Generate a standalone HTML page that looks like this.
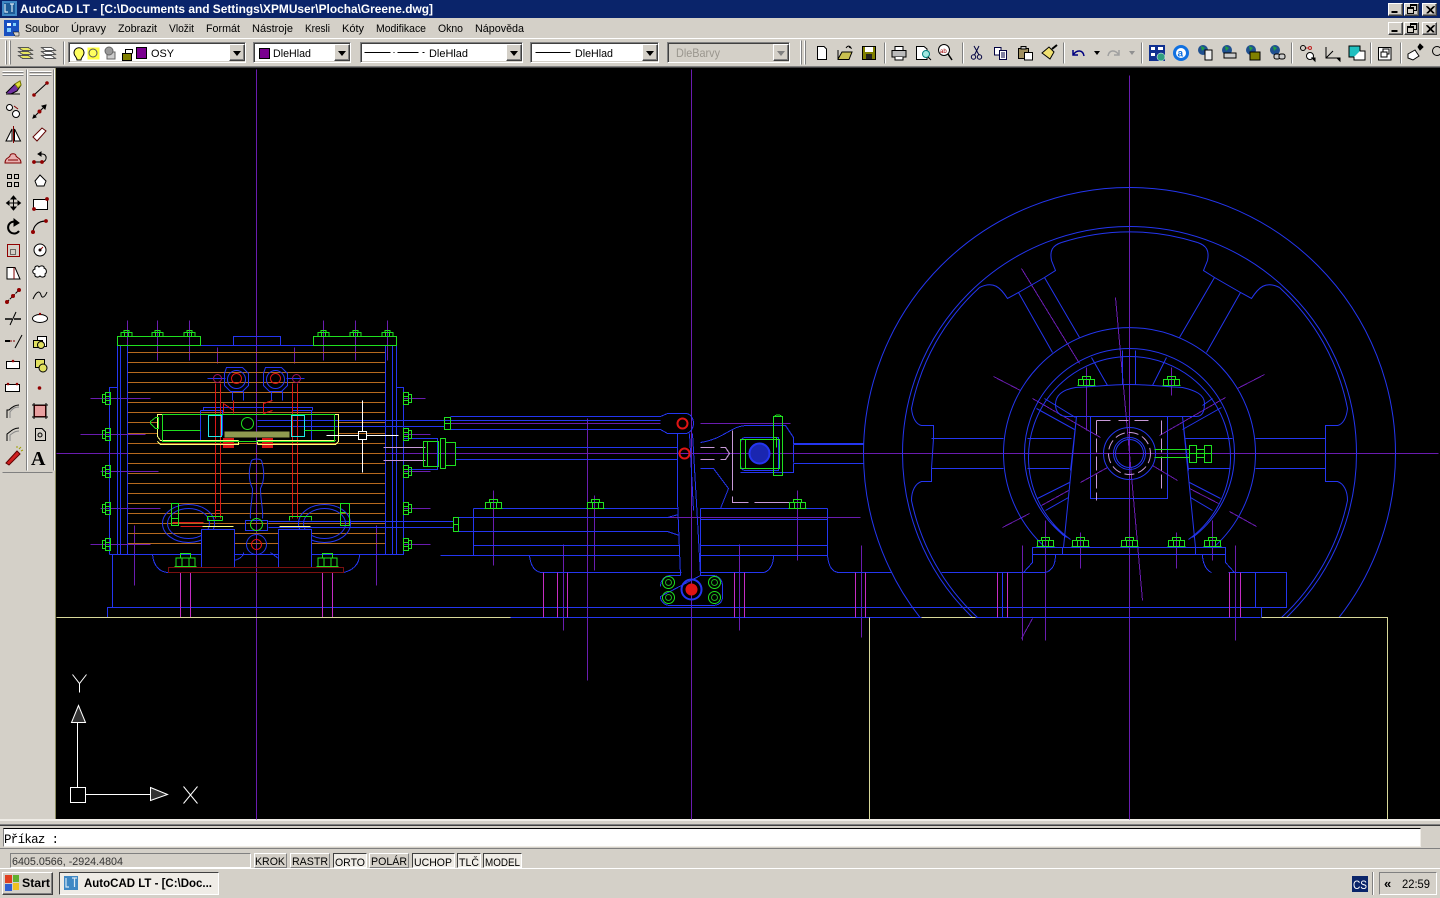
<!DOCTYPE html>
<html lang="cs"><head><meta charset="utf-8"><title>AutoCAD LT</title>
<style>
html,body{margin:0;padding:0;width:1440px;height:898px;overflow:hidden;background:#d4d0c8}
div{position:absolute;box-sizing:border-box}
.s{background:#fff;border:1px solid;border-color:#808080 #fff #fff #808080;box-shadow:inset 1px 1px #404040,inset -1px -1px #d4d0c8}
.r{background:#d4d0c8;border:1px solid;border-color:#fff #404040 #404040 #fff;box-shadow:inset -1px -1px #808080}
.t{background:#d4d0c8;border:1px solid;border-color:#808080 #fff #fff #808080}
.o{background:#d4d0c8;border:1px solid;border-color:#fff #808080 #808080 #fff}
.p{background:#efece6;border:1px solid;border-color:#404040 #fff #fff #404040}
svg{position:absolute;left:0;top:0}
text{font-family:"Liberation Sans",sans-serif;font-size:11px;fill:#000}
</style></head><body>
<div style="left:0;top:0;width:1440px;height:18px;background:#0a246a"></div>
<div style="left:0;top:38px;width:1440px;height:1px;background:#fff"></div>
<div style="left:0;top:66px;width:1440px;height:1px;background:#808080"></div>
<div style="left:0;top:67px;width:1440px;height:1px;background:#404040"></div>
<div style="left:55px;top:68px;width:1385px;height:751px;background:#000;border-left:1px solid #8c8c60"></div>
<div style="left:0;top:819px;width:1440px;height:2px;background:#efece6"></div>
<div style="left:0;top:824px;width:1440px;height:1px;background:#808080"></div>
<div style="left:0;top:825px;width:1440px;height:1px;background:#404040"></div>
<div style="left:0;top:848px;width:1440px;height:1px;background:#808080"></div>
<div style="left:0;top:868px;width:1440px;height:1px;background:#fff"></div>
<div style="left:3px;top:828px;width:1418px;height:19px;background:#fff;border:1px solid;border-color:#000 #efece6 #efece6 #808080"></div>

<div class="s" style="left:68px;top:42px;width:178px;height:21px"></div><div class="r" style="left:229px;top:44px;width:16px;height:17px"></div>
<div class="s" style="left:253px;top:42px;width:98px;height:21px"></div><div class="r" style="left:334px;top:44px;width:16px;height:17px"></div>
<div class="s" style="left:360px;top:42px;width:163px;height:21px"></div><div class="r" style="left:506px;top:44px;width:16px;height:17px"></div>
<div class="s" style="left:530px;top:42px;width:129px;height:21px"></div><div class="r" style="left:642px;top:44px;width:16px;height:17px"></div>
<div class="s" style="left:667px;top:42px;width:123px;height:21px;background:#d4d0c8"></div><div class="r" style="left:773px;top:44px;width:16px;height:17px"></div>

<div class="r" style="left:1388px;top:3px;width:15px;height:13px"></div><div class="r" style="left:1404px;top:3px;width:15px;height:13px"></div><div class="r" style="left:1422px;top:3px;width:15px;height:13px"></div>
<div class="r" style="left:1388px;top:22px;width:15px;height:13px"></div><div class="r" style="left:1404px;top:22px;width:15px;height:13px"></div><div class="r" style="left:1422px;top:22px;width:15px;height:13px"></div>

<div class="t" style="left:10px;top:853px;width:241px;height:15px;box-shadow:none"></div>
<div class="o" style="left:254px;top:853px;width:33px;height:15px"></div>
<div class="o" style="left:290px;top:853px;width:40px;height:15px"></div>
<div class="p" style="left:333px;top:853px;width:34px;height:15px"></div>
<div class="o" style="left:369px;top:853px;width:40px;height:15px"></div>
<div class="p" style="left:412px;top:853px;width:43px;height:15px"></div>
<div class="p" style="left:457px;top:853px;width:24px;height:15px"></div>
<div class="p" style="left:483px;top:853px;width:39px;height:15px"></div>

<div class="r" style="left:2px;top:872px;width:51px;height:23px"></div>
<div class="p" style="left:59px;top:872px;width:160px;height:23px"></div>
<div class="t" style="left:1379px;top:872px;width:58px;height:23px"></div>
<div style="left:1352px;top:876px;width:16px;height:16px;background:#0a246a"></div>
<div style="left:1372px;top:872px;width:1px;height:23px;background:#808080"></div>
<div style="left:1373px;top:872px;width:1px;height:23px;background:#fff"></div>

<svg width="1440" height="898" viewBox="0 0 1440 898" fill="none">
<defs>
<clipPath id="cv"><rect x="56" y="69" width="1384" height="750"/></clipPath>
<clipPath id="wc"><rect x="700" y="100" width="740" height="517"/></clipPath>
<g id="b" stroke="#1fe01f"><path vector-effect="non-scaling-stroke" d="M-9 0H9M-8 0V-6H8V0M-3 0V-6M3 0V-6M-4-6V-9H4V-6"/></g>
<g id="sb" stroke="#1fe01f"><path d="M0-6V6H5V-6ZM5-4H8V4H5M0-2H5M0 2H5"/></g>
<g id="sl" stroke="#1fe01f"><path d="M0-6V6H-5V-6ZM-5-4H-8V4H-5M0-2H-5M0 2H-5"/></g>
<g id="gb"><circle r="6" stroke="#1fe01f"/><circle r="3" stroke="#1fb01f"/></g>
</defs>

<!-- CAD drawing -->
<g clip-path="url(#cv)" transform="translate(.5 .5)" shape-rendering="crispEdges">
<!-- purple centre lines -->
<g stroke="#6a1cb0">
<path d="M256 69V819M691 69V819M1129 75V819M56 453H1438"/>
<path d="M587 418V680M563 544V630M739 544V630M127 320V360M157 320V360M189 320V360M323 320V360M355 320V360M387 320V360M217 347V363M294 347V363M134 525V585M376 525V585M1086 367V430M1171 367V395M861 545V637M1022 545V640M1045 545V640M1235 545V640M1080 532V568M1176 532V568M1045 520V560M1212 520V560M594 495V570M493 490V565M797 490V560"/>
<path d="M90 398H150M80 434H145M100 471H158M100 508H160M90 544H150M403 398H425M403 434H430M403 471H430M403 508H430M403 544H430"/>
<path d="M450 423H660M700 423H790M660 517H860"/>
<path d="M1021 268L1079 363M993 376L1020 390M1032 398L1100 437M1264 374L1237 388M1225 397L1159 435M1002 527L1029 513M1041 505L1068 490M1080 482L1107 467M1152 465L1177 480M1189 488L1218 503M1229 511L1256 526M1115 297L1129 453L1142 600M1032 618L1021 638"/>
</g>
<!-- orange hatch -->
<g stroke="#b5691e"><path d="M127 352H385M127 362H385M127 372H385M127 382H385M127 392H385M127 402H385M127 412H385M127 422H157M127 433H157M338 422H385M338 433H385M127 443H385M127 453H385M127 463H385M127 473H385M127 483H385M127 493H385M127 503H385M127 513H385M127 523H385M127 533H385M127 543H385M127 554H385"/></g>
<!-- blue frame -->
<g stroke="#2436f0" shape-rendering="geometricPrecision">
<ellipse cx="188" cy="523" rx="26" ry="19"/><ellipse cx="188" cy="523" rx="21" ry="15"/>
<ellipse cx="324" cy="523" rx="26" ry="19"/><ellipse cx="324" cy="523" rx="21" ry="15"/>
</g>
<g stroke="#2436f0">
<path d="M117 345H396V554H117ZM120 345V554M127 345V554M385 345V554M392 345V554M233 345V336H280V345"/>
<path d="M109 554V387H117M396 387H403V554H109M112 554V607M107 617V607H1261V617M107 617H1260"/>
<path d="M152 554C153 566 160 572 168 572M343 572C352 570 359 564 359 554"/>
<path d="M201 529V567H234V529ZM278 529V567H311V529Z" fill="#000"/><path d="M234 560C240 558 243 555 243 552M278 558L270 552"/>
<path d="M403 438H437V469H403"/>
<path d="M257 420H660M268 426H444M257 426H268M450 416H660L667 413H685C690 413 693 418 693 423C693 428 689 433 685 433H667L660 429H450"/>
<path d="M455 447H677M455 459H677M268 521H453M268 527H453M458 517H667L678 514M458 531H667L679 535"/>
<path d="M473 508H678M700 508H827M473 508V555M827 508V555M473 545H679M700 519H827M700 545H827M440 555H679M700 555H827"/>
<path d="M529 555C530 566 535 572 542 572H681M700 572H762C768 572 773 565 773 555M827 555C828 566 832 572 839 572H891M1228 572H1286V607H1045M941 572H1045M1023 572L1032 562V554M1045 572C1052 570 1055 563 1055 554M1211 572C1206 570 1202 563 1202 554M1225 554V562L1234 572M1261 607V617M1286 607H1260M1255 572V607M1002 572V617"/>
<path d="M677 433L677 500L680 575M692 433L697 520L700 575M689 433L693 510M700 508V575"/>
<path d="M660 586C660 579 665 575 670 575H680M700 575H712C718 575 722 579 722 586V596C722 602 718 605 712 605H670C665 605 660 602 660 596Z"/>
<path d="M700 442C725 438 730 425 747 425H785L793 437V443H863M793 463V472H740M793 463H863M700 468H713L728 488L720 508M793 462V444"/>
<path d="M740 443C740 439 742 437 745 437H778V470H745C742 470 740 468 740 464Z"/>
</g>
<g stroke="#2436f0" stroke-width="1" shape-rendering="geometricPrecision">
<circle cx="691" cy="589" r="10" stroke-width="2"/>
<ellipse cx="759" cy="453" rx="10" ry="10" stroke-width="2" fill="#1a26b0"/>
<path d="M251 460C248 470 248 480 252 488C252 500 249 510 250 518M261 460C264 470 264 480 260 488C260 500 263 510 262 518M251 460C253 458 259 458 261 460"/>
<path d="M245 520H267V530H245Z" />
<circle cx="256" cy="544" r="10"/>
<path d="M226 367L242 367L248 373V385L242 391H230L224 385V373Z"/><path d="M265 367H281L287 373V385L281 391H269L263 385V373Z"/>
<circle cx="236" cy="379" r="9"/><circle cx="275" cy="379" r="9"/>
<path d="M203 410V407H312V410M232 391V400M243 391V400M271 391V400M282 391V400M207 378H225M286 378H304"/>
<path d="M200 410H222V435M292 435V410H311V440H290M200 440H222M200 410V440"/>
</g>
<!-- Wheel -->
<g clip-path="url(#wc)" stroke="#2436f0" shape-rendering="geometricPrecision">
<circle cx="1129" cy="453" r="266"/>
<circle cx="1129" cy="453" r="227"/>
<path id="pad" d="M979 287C993 280 1000 287 1007 298L1018 292L1044 277L1055 270L1051 260C1049 250 1052 245 1061 242"/>
<use href="#pad" transform="matrix(-1 0 0 1 2258 0)"/>
<path d="M979 287A222 222 0 0 0 911 408C912 418 916 424 921 425H933V438L931 468V481H921C915 483 911 490 911 500A222 222 0 0 0 977 617"/>
<path d="M1279 287A222 222 0 0 1 1347 408C1346 418 1342 424 1337 425H1325V438L1325 468V481H1337C1343 483 1347 490 1347 500A222 222 0 0 1 1281 617"/>
<path d="M1061 242A222 222 0 0 1 1197 242"/>
<path d="M931 438H1003M931 468H1003M1255 438H1325M1255 468H1325M1018 292L1052 352M1044 277L1079 337M1240 292L1206 352M1214 277L1179 337"/>
<path d="M1045 547A126 126 0 1 1 1213 547"/>
<path d="M1066 537A105 105 0 1 1 1192 537"/>
<path d="M1070 539A101 101 0 1 1 1188 539"/>
<path d="M1063 535L1052 524"/>
<path d="M1091 357L1107 385M1166 357L1152 385M1122 350V384M1135 350V384M1027 438H1071M1027 468H1069M1185 438H1232M1187 468H1230M1036 408L1074 429M1044 398L1075 417M1221 407L1182 429M1212 398L1202 405M1037 498L1069 482M1045 510L1068 497M1220 498L1189 482M1212 510L1190 497"/>
<path d="M1075 387C1095 386 1112 384 1129 384C1146 384 1163 386 1182 387C1195 390 1204 394 1204 403C1204 411 1202 416 1196 416H1066C1060 416 1055 412 1055 404C1055 394 1063 389 1075 387Z"/>
<path d="M1090 416V498H1167V416ZM1076 416L1063 547M1182 416L1195 547M1076 416L1070 470M1182 416L1188 470"/>
<path d="M1032 547H1225V554H1032ZM1062 547V554M1195 547V554M1032 554V562"/>
<circle cx="1129" cy="453" r="26"/><circle cx="1129" cy="453" r="16"/><circle cx="1129" cy="453" r="14"/>
<path d="M793 444H863M793 463H863"/>
</g>
<!-- magenta legs -->
<g stroke="#c42cc4"><path d="M180 572V617M190 572V617M322 572V617M332 572V617M543 572V617M557 572V617M567 572V617M734 572V617M744 572V617M855 572V617M865 572V617M997 572V617M1007 572V617M1229 572V617M1240 572V617"/></g>
<!-- pale pink dashes -->
<g stroke="#c89ad8"><path d="M1096 420V500M1161 420V490M1096 420H1112M1118 420H1128M1134 420H1150" stroke-dasharray="14 4"/><path d="M732 430V502H790" stroke-dasharray="60 6 22 6"/><path d="M700 447H714M720 447H725L729 453L725 459H720M700 459H714"/>
<path d="M383 447H425M383 460H425"/></g>
<g stroke="#c89ad8" shape-rendering="geometricPrecision"><circle cx="1129" cy="453" r="21" stroke-dasharray="10 4"/></g>
<!-- pale yellow outlines -->
<g stroke="#d8d89a"><path d="M56 617H510M921 617H975M1261 617H1387V819M869 617V819"/></g>
<!-- red -->
<g stroke="#7a1010"><path d="M168 567H343V572H168Z"/></g>
<g stroke="#d81818"><path d="M215 383V518M220 383V518M292 383V518M297 383V518M172 522H203M180 526H210M223 403V413M223 403L233 410M233 400V413M263 413V403L272 400M272 410L263 413"/><path d="M223 438H233V447H223ZM262 438H272V447H262Z" fill="#d81818"/><path d="M215 518V510H220M297 518V510"/></g>
<g stroke="#e01414" shape-rendering="geometricPrecision" stroke-width="2"><circle cx="682" cy="423" r="5"/><circle cx="684" cy="453" r="5"/><circle cx="691" cy="589" r="5" fill="#e01414"/><circle cx="236" cy="378" r="5" stroke-width="1"/><circle cx="275" cy="378" r="5" stroke-width="1"/><circle cx="256" cy="544" r="5" stroke-width="1"/></g>
<g stroke="#a01060" shape-rendering="geometricPrecision"><circle cx="217" cy="378" r="4"/><circle cx="296" cy="378" r="4"/></g>
<!-- yellow plate -->
<g stroke="#ffff7a"><path d="M238 440H160L157 436V414H162M238 440V444H160L157 441M257 444H335L338 441V414H334M257 440V444M257 440H335" /><path d="M202 526H233M279 526H310"/></g>
<g stroke="#20e8e8"><path d="M208 415H221V436H208ZM291 415H304V436H291Z"/></g>
<g><rect x="224" y="431" width="65" height="6" fill="#8f9a50"/></g>
<!-- green -->
<g stroke="#1fe01f">
<path d="M117 336H200V345H117ZM313 336H396V345H313Z"/>
<path d="M162 414H334V441H162ZM162 430H200M304 430H334"/>
<path d="M444 417H450V429H444ZM444 423H450"/>
<path d="M423 441H438V466H423ZM440 438H445V468H440ZM445 442H455V465H445ZM427 441V466"/>
<path d="M453 517H458V531H453ZM453 524H458"/>
<path d="M740 439H779V468H740ZM773 416H782V475H773ZM745 439V468M774 416C775 414 780 414 781 416"/>
<path d="M773 442V437H776V447"/>
<path d="M1154 449H1189M1154 457H1189M1189 445H1196V462H1189ZM1196 449H1204M1196 457H1204M1204 445H1211V462H1204ZM1189 453H1211"/>
<path d="M171 503H178V525H171ZM171 518H178M340 503H349V525H340ZM340 512H345"/>
<path d="M207 520H222M207 520V516H222V520M289 520V516H311V520"/>
<path d="M150 421L155 417H158V428H155L150 423Z"/>
</g>
<g stroke="#1fe01f" shape-rendering="geometricPrecision"><circle cx="247" cy="423" r="6"/><circle cx="256" cy="524" r="6"/></g>
<use href="#b" transform="translate(126 336) scale(.66)"/><use href="#b" transform="translate(157 336) scale(.66)"/><use href="#b" transform="translate(189 336) scale(.66)"/><use href="#b" transform="translate(323 336) scale(.66)"/><use href="#b" transform="translate(355 336) scale(.66)"/><use href="#b" transform="translate(387 336) scale(.66)"/>
<use href="#b" transform="translate(185 566) scale(1.2 1.45)"/><use href="#b" transform="translate(327 566) scale(1.2 1.45)"/>
<use href="#b" x="493" y="508"/><use href="#b" x="595" y="508"/><use href="#b" x="797" y="508"/>
<use href="#b" x="1086" y="385"/><use href="#b" x="1171" y="385"/>
<use href="#b" x="1045" y="546"/><use href="#b" x="1080" y="546"/><use href="#b" x="1129" y="546"/><use href="#b" x="1176" y="546"/><use href="#b" x="1212" y="546"/>
<use href="#sl" x="110" y="398"/><use href="#sl" x="110" y="434"/><use href="#sl" x="110" y="471"/><use href="#sl" x="110" y="508"/><use href="#sl" x="110" y="544"/>
<use href="#sb" x="403" y="398"/><use href="#sb" x="403" y="434"/><use href="#sb" x="403" y="471"/><use href="#sb" x="403" y="508"/><use href="#sb" x="403" y="544"/>
<g shape-rendering="geometricPrecision"><use href="#gb" x="668" y="582"/><use href="#gb" x="668" y="597"/><use href="#gb" x="714" y="582"/><use href="#gb" x="714" y="597"/></g>
<!-- cursor -->
<g stroke="#fff"><path d="M326 435H358M366 435H398M362 400V431M362 439V472M358 431H366V439H358Z"/></g>
<!-- UCS -->
<g stroke="#fff"><path d="M70 787H85V802H70ZM85 794H150M77 787V722"/></g>
<g stroke="#fff" shape-rendering="geometricPrecision"><path d="M150 787L167 794L150 800Z" fill="#333"/><path d="M78 705L71 722H85Z" fill="#333"/><path d="M72 674L79 683L86 674M79 683V692M183 786L197 803M197 786L183 803"/></g>
</g>

<!-- Title -->
<g>
<rect x="2" y="1" width="15" height="15" fill="#3f88c4"/><rect x="4" y="3" width="11" height="11" fill="#1d5a96"/>
<path d="M5 4V12H8M10 4H14M12 4V12" stroke="#d8e8f4" stroke-width="1.2"/>
<text x="20" y="13" textLength="413" lengthAdjust="spacingAndGlyphs" style="font-weight:bold;font-size:11.5px;fill:#fff">AutoCAD LT - [C:\Documents and Settings\XPMUser\Plocha\Greene.dwg]</text>
<!-- window buttons -->
<g stroke="#000" fill="none" transform="translate(.5 .5)" shape-rendering="crispEdges">
<path d="M1391 12H1397M1391 11H1397"/><path d="M1407 7H1413V13H1407ZM1410 7V4H1416V10H1413M1407 8H1413M1410 5H1416"/><path d="M1426 6L1433 13M1427 6L1434 13M1433 6L1426 13M1434 6L1427 13"/>
<path d="M1391 31H1397M1391 30H1397"/><path d="M1407 26H1413V32H1407ZM1410 26V23H1416V29H1413M1407 27H1413M1410 24H1416"/><path d="M1426 25L1433 32M1427 25L1434 32M1433 25L1426 32M1434 25L1427 32"/>
</g>
<!-- Menu -->
<rect x="4" y="20" width="15" height="16" fill="#1a50c0"/><rect x="7" y="23" width="4" height="3" fill="#fff"/><rect x="13" y="23" width="3" height="3" fill="#7fd0ff"/><rect x="7" y="28" width="4" height="4" fill="#7fd0ff"/><path d="M13 32H19V36H15Z" fill="#d4d0c8" stroke="#000" stroke-width=".5"/>
<text x="25" y="32" textLength="34" lengthAdjust="spacingAndGlyphs">Soubor</text>
<text x="71" y="32" textLength="35" lengthAdjust="spacingAndGlyphs">Úpravy</text>
<text x="118" y="32" textLength="39" lengthAdjust="spacingAndGlyphs">Zobrazit</text>
<text x="169" y="32" textLength="25" lengthAdjust="spacingAndGlyphs">Vložit</text>
<text x="206" y="32" textLength="34" lengthAdjust="spacingAndGlyphs">Formát</text>
<text x="252" y="32" textLength="41" lengthAdjust="spacingAndGlyphs">Nástroje</text>
<text x="305" y="32" textLength="25" lengthAdjust="spacingAndGlyphs">Kresli</text>
<text x="342" y="32" textLength="22" lengthAdjust="spacingAndGlyphs">Kóty</text>
<text x="376" y="32" textLength="50" lengthAdjust="spacingAndGlyphs">Modifikace</text>
<text x="438" y="32" textLength="25" lengthAdjust="spacingAndGlyphs">Okno</text>
<text x="475" y="32" textLength="49" lengthAdjust="spacingAndGlyphs">Nápověda</text>

<!-- Toolbar combos -->
<g transform="translate(.5 .5)" shape-rendering="crispEdges">
<path d="M5 40V64M9 40V64M800 40V64M804 40V64" stroke="#fff"/><path d="M6 40V64M10 40V64M801 40V64M805 40V64" stroke="#808080"/>
<path d="M63 41V64M884 42V63M962 42V63M1063 42V63M1141 42V63M1291 42V63M1370 42V63M1400 42V63" stroke="#808080"/>
<path d="M64 41V64M885 42V63M963 42V63M1064 42V63M1142 42V63M1292 42V63M1371 42V63M1401 42V63" stroke="#fff"/>
<!-- layer icons -->
<path d="M18 47H28L32 50H22ZM18 51H28L32 54H22ZM18 55H28L32 58H22Z" fill="#e8e860" stroke="#555"/>
<path d="M41 47H51L55 50H45ZM41 51H51L55 54H45ZM41 55H51L55 58H45Z" fill="#fff" stroke="#555"/>
<rect x="136" y="47" width="10" height="11" fill="#7a0090" stroke="#000"/>
<rect x="259" y="48" width="10" height="10" fill="#7a0090" stroke="#000"/>
<path d="M122 53H131V60H122Z" fill="#808000" stroke="#000"/><path d="M125 53V49H132V53" stroke="#000"/>
<rect x="87" y="47" width="12" height="12" fill="#ffff40"/>
<path d="M364 52H390M397 52H418" stroke="#000"/><path d="M393 52H394M422 52H424" stroke="#000"/>
<path d="M535 52H570" stroke="#000"/>
</g>
<path d="M74 53C74 46 84 46 84 53C84 56 81 57 81 60H77C77 57 74 56 74 53Z" fill="#ffff60" stroke="#000"/>
<circle cx="93" cy="53" r="4" fill="#ffff60" stroke="#555"/>
<rect x="107" y="52" width="8" height="7" fill="#ccc" stroke="#666"/><circle cx="109" cy="51" r="4" fill="#999" stroke="#666"/>
<g style="font-size:12px">
<text x="151" y="57" textLength="23" lengthAdjust="spacingAndGlyphs">OSY</text>
<text x="273" y="57" textLength="38" lengthAdjust="spacingAndGlyphs">DleHlad</text>
<text x="429" y="57" textLength="39" lengthAdjust="spacingAndGlyphs">DleHlad</text>
<text x="575" y="57" textLength="38" lengthAdjust="spacingAndGlyphs">DleHlad</text>
<text x="676" y="57" textLength="44" lengthAdjust="spacingAndGlyphs" style="fill:#9a968e;font-size:12px">DleBarvy</text>
</g>
<path d="M233 51H241L237 56ZM338 51H346L342 56ZM510 51H518L514 56ZM646 51H654L650 56Z" fill="#000"/><path d="M777 51H785L781 56Z" fill="#808080"/>

<!-- std toolbar icons -->
<g stroke="#000" stroke-width="1">
<path d="M817.5 46.500H824L826.500 49V59.500H817.500Z" fill="#fff"/>
<path d="M838 50V59.500H849L852 52H842L838 59" fill="#c8c050"/><path d="M846 48C848 45 850 46 851 48L849 47" stroke="#000"/>
<path d="M862.500 46.500H875.500V59.500H862.500Z" fill="#808000"/><rect x="865" y="47" width="8" height="5" fill="#fff" stroke="none"/><rect x="866" y="54" width="6" height="5" fill="#222" stroke="none"/>
<path d="M892 50.500H906V57H892Z" fill="#bbb"/><path d="M895 46.500H903V50.500H895ZM895 57V60H903V57" fill="#fff"/>
<path d="M916.500 46.500H924L927 49V59.500H916.500Z" fill="#fff"/><circle cx="926" cy="54" r="3.500" fill="#a0e8e0" stroke="#008080"/><path d="M928 57L931 60"/>
<circle cx="944" cy="50" r="5.500" fill="#fff"/><path d="M948 54L952 60" stroke-width="1.500"/>
</g>
<text x="940" y="53" style="font-size:6px;fill:#a00000">ab</text>
<g stroke="#000040" fill="none"><circle cx="973.500" cy="57" r="2.200"/><circle cx="979.500" cy="57" r="2.200"/><path d="M974.500 55L979 46M979 55L974 46"/>
<path d="M994.500 47.500H1001V55H994.500Z" fill="#fff"/><path d="M999.500 50.500H1006.500V59.500H999.500Z" fill="#fff"/><path d="M1001 53H1005M1001 55H1005M1001 57H1005"/></g>
<g stroke="#000"><path d="M1018.500 48.500H1028.500V58.500H1018.500Z" fill="#a09060"/><path d="M1021 46.500H1026V49H1021Z" fill="#ccc"/><path d="M1024.500 52.500H1032.500V60H1024.500Z" fill="#fff"/>
<path d="M1042 53L1049 47L1054 52L1050 59Z" fill="#f0e070"/><path d="M1052 49L1057 45" stroke-width="2"/></g>
<g stroke="#000080" fill="none" stroke-width="1.500"><path d="M1073 50V55H1078M1073 55C1077 49 1083 50 1084 56"/></g>
<path d="M1094 51H1100L1097 55Z" fill="#000"/>
<g stroke="#a0a0a0" fill="none" stroke-width="1.500"><path d="M1119 50V55H1114M1119 55C1115 49 1109 50 1108 56"/></g>
<path d="M1129 51H1135L1132 55Z" fill="#909090"/>
<!-- blue group -->
<rect x="1149" y="45" width="16" height="16" fill="#103090"/><rect x="1151" y="47" width="4" height="3" fill="#fff"/><rect x="1151" y="53" width="4" height="3" fill="#fff"/><rect x="1158" y="47" width="5" height="3" fill="#fff"/><circle cx="1161" cy="57" r="4" fill="#30a080" stroke="#fff" stroke-width=".5"/>
<circle cx="1181" cy="53" r="8" fill="#1070e0"/><circle cx="1181" cy="53" r="5" fill="#fff"/><text x="1177.500" y="56.500" style="font-size:10px;font-weight:bold;fill:#1070e0">a</text>
<circle cx="1203" cy="50" r="5" fill="#205090"/><path d="M1201 46L1205 48L1202 51Z" fill="#20a040"/>
<path d="M1205 50H1212V60H1205Z" fill="#eee" stroke="#000"/>
<circle cx="1227" cy="50" r="5" fill="#205090"/><path d="M1225 46L1229 48L1226 51Z" fill="#20a040"/><path d="M1224 53H1236V58H1224Z" fill="#ccc" stroke="#000"/>
<circle cx="1251" cy="50" r="5" fill="#205090"/><path d="M1249 46L1253 48L1250 51Z" fill="#20a040"/><path d="M1250 52H1260V60H1250Z" fill="#808000" stroke="#000"/>
<circle cx="1275" cy="50" r="5" fill="#205090"/><path d="M1273 46L1277 48L1274 51Z" fill="#20a040"/><rect x="1274" y="54" width="6" height="5" rx="2" stroke="#000" fill="#ccc"/><rect x="1279" y="54" width="6" height="5" rx="2" stroke="#000" fill="#ccc"/>
<g stroke="#000" fill="none"><circle cx="1303" cy="48" r="2.500"/><path d="M1306 48H1309" stroke="#c02020"/><circle cx="1310" cy="48" r="1.500" stroke="#c02020"/><circle cx="1310" cy="56" r="3.500" fill="#fff"/><path d="M1326 47V58H1337M1326 58L1333 51"/><path d="M1312 58L1315 61V58ZM1337 58L1340 61V58Z" fill="#000"/></g>
<rect x="1349" y="46" width="11" height="11" fill="#20c0c0" stroke="#000"/><path d="M1360 51H1365V60H1354V57" stroke="#000" fill="#fff"/>
<g stroke="#000" fill="none"><path d="M1378.500 47.500H1391V60H1378.500Z" fill="#fff"/><path d="M1381 52H1387V57H1381ZM1383 52V49H1389V54H1387"/></g>
<g stroke="#000" fill="#fff"><path d="M1408 54L1415 50L1419 56L1413 60L1408 58Z"/><path d="M1418 47L1420 50L1423 47L1420 44Z" fill="#000"/></g>
<circle cx="1437" cy="51" r="4.500" fill="none" stroke="#000"/>

<!-- left toolbar grippers -->
<g transform="translate(.5 .5)" shape-rendering="crispEdges">
<path d="M2 71H23M2 74H23M29 71H51M29 74H51" stroke="#fff"/><path d="M2 72H23M2 75H23M29 72H51M29 75H51" stroke="#808080"/>
<path d="M26 69V470M53 69V470" stroke="#808080"/><path d="M27 69V470M54 69V470" stroke="#fff"/>
<path d="M2 472H52" stroke="#808080"/>
</g>
<!-- left icons col 1 -->
<g stroke="#000" fill="none">
<path d="M6 93L15 84L20 81L21 85L17 91L11 94" fill="#7030a0"/><path d="M15 84L20 81L21 85L18 88Z" fill="#e0e040" stroke="#808000"/><path d="M6 94H20"/>
<circle cx="9.500" cy="107.500" r="3" fill="#fff"/><circle cx="16" cy="114" r="3.500" fill="#fff"/><path d="M14 106L18 109" stroke="#800000"/>
<path d="M12 129L6 141H12ZM14.500 129L20.500 141H14.500Z" fill="#fff"/><path d="M13.500 126V143" stroke="#800000"/>
<path d="M5 163C5 158 9 158 10 156C10 153 16 153 16 156C17 158 21 158 21 163H5Z" fill="#e8b0b0" stroke="#800000"/><path d="M8 160H18" stroke="#800000"/>
<path d="M7.500 174.500H11.500V178.500H7.500ZM14.500 174.500H18.500V178.500H14.500ZM7.500 182.500H11.500V186.500H7.500ZM14.500 182.500H18.500V186.500H14.500Z"/>
<path d="M13.500 196V210M6.500 203H20.500M13.500 196L11 199H16ZM13.500 210L11 207H16ZM6.500 203L9 201V205ZM20.500 203L18 201V205Z" fill="#000"/>
<path d="M18 223A6 6 0 1 0 19 231" stroke-width="2"/><path d="M14 219L19 223L14 226Z" fill="#000"/>
<path d="M7.500 244.500H19.500V256.500H7.500Z" stroke="#900000"/><path d="M10.500 249.500H15.500V254.500H10.500Z" stroke-dasharray="1 1"/>
<path d="M7 267.500H15L20 279H7Z" fill="#fff"/><path d="M14 267.500V279" stroke="#800000"/>
<path d="M7 302L19 290" stroke-dasharray="3 1"/><circle cx="7" cy="302" r="1.500" fill="#900000" stroke="#900000"/><circle cx="13" cy="296" r="1.500" fill="#900000" stroke="#900000"/><circle cx="19" cy="290" r="1.500" fill="#900000" stroke="#900000"/>
<path d="M5 319H12M14 319H21" stroke-width="1.500"/><path d="M10 325L16 312" />
<path d="M5 341H10" stroke-width="2"/><path d="M15 348L22 335"/><path d="M10 341H15" stroke="#800000" stroke-dasharray="2 1"/>
<path d="M6.500 361.500H19.500V368.500H6.500Z" fill="#fff"/><circle cx="13" cy="361" r="1.300" fill="#900000" stroke="none"/>
<path d="M5.500 384.500H19.500V391.500H5.500Z" fill="#fff"/><circle cx="8" cy="384" r="1.300" fill="#900000" stroke="none"/><circle cx="17" cy="384" r="1.300" fill="#900000" stroke="none"/>
<path d="M7 418V410H9C13 406 16 405 19 405"/><path d="M10 418V412C13 408 15 407 19 407" stroke="#888"/>
<path d="M7 441V434C10 432 13 428 19 428"/><path d="M10 441V435C13 433 15 431 19 431" stroke="#888"/>
<path d="M6 463L17 451L20 454L9 465Z" fill="#d02020" stroke="#600000"/><path d="M19 449L21 447M21 451L23 450M17 448L17 446" stroke="#a0a000"/>
</g>
<!-- left icons col 2 -->
<g stroke="#000" fill="none">
<path d="M34 95L47 83"/><circle cx="34" cy="95" r="1.300" fill="#900000" stroke="#900000"/><circle cx="47" cy="83" r="1.300" fill="#900000" stroke="#900000"/>
<path d="M33 118L46 105M46 105L42 106L45 109Z" fill="#000"/><circle cx="39.500" cy="111.500" r="1.500" fill="#900000" stroke="#900000"/><path d="M33 118L36 117L34 115Z" fill="#000"/>
<path d="M33 137L42 128L46 131L37 141Z" fill="#fff" stroke="#600000"/>
<path d="M34 162H42C47 162 48 154 42 154H38" /><circle cx="34" cy="162" r="1.400" fill="#900000" stroke="#900000"/><circle cx="42" cy="162" r="1.400" fill="#900000" stroke="#900000"/><path d="M38 154L41 152V156Z" fill="#000"/>
<path d="M35 181L40 175L46 181L44 186H37Z" fill="#fff"/>
<path d="M33.500 199.500H47.500V209.500H33.500Z" fill="#fff"/><circle cx="34" cy="209" r="1.400" fill="#900000" stroke="#900000"/><circle cx="47" cy="199" r="1.400" fill="#900000" stroke="#900000"/>
<path d="M33 233C33 226 38 221 46 221" stroke="#000" stroke-width="1.200"/><circle cx="33" cy="232" r="1.500" fill="#900000" stroke="#900000"/><circle cx="46" cy="221" r="1.400" fill="#900000" stroke="#900000"/>
<circle cx="40" cy="250" r="6" fill="#fff"/><path d="M40 250L43 247" stroke="#900000"/><circle cx="40" cy="250" r="1" fill="#900000"/>
<path d="M35 269C34 266 38 265 39 267C41 265 45 266 44 268C47 269 47 273 45 274C46 277 42 278 40 276C38 278 34 277 35 274C32 273 32 270 35 269Z" fill="#fff"/>
<path d="M33 299C37 290 40 291 41 295C42 299 45 297 47 292"/>
<ellipse cx="40" cy="318.500" rx="7.500" ry="4" fill="#fff"/><circle cx="40" cy="314" r="1.200" fill="#900000" stroke="none"/>
<rect x="37.500" y="336.500" width="9" height="10" fill="#fff"/><rect x="33.500" y="340.500" width="9" height="7" fill="#e0e060"/><circle cx="41" cy="345" r="3.500" fill="#e0e060"/>
<rect x="35.500" y="359.500" width="9" height="8" fill="#e0e060"/><circle cx="43" cy="368" r="4" fill="#e0e060"/>
<circle cx="39.500" cy="388" r="1.300" fill="#900000" stroke="#900000"/>
<path d="M34.500 405.500H45.500V416.500H34.500Z" fill="#e8a0a0" stroke="#600000"/><path d="M32 405H48M32 417H48M34 403V419M46 403V419"/>
<path d="M35.500 428.500H42L45.500 432V440.500H35.500Z"/><circle cx="40" cy="435" r="2"/>
</g>
<text x="31" y="465" style="font-family:'Liberation Serif',serif;font-size:20px;font-weight:bold">A</text>

<!-- command & status -->
<text x="4" y="843" style="font-family:'Liberation Mono',monospace;font-size:12.500px" textLength="55">Příkaz :</text>
<g style="font-size:11.500px">
<text x="12" y="865" textLength="111" lengthAdjust="spacingAndGlyphs" style="fill:#333">6405.0566, -2924.4804</text>
<text x="255" y="865" textLength="30" lengthAdjust="spacingAndGlyphs">KROK</text>
<text x="292" y="865" textLength="36" lengthAdjust="spacingAndGlyphs">RASTR</text>
<text x="335" y="866" textLength="30" lengthAdjust="spacingAndGlyphs">ORTO</text>
<text x="371" y="865" textLength="36" lengthAdjust="spacingAndGlyphs">POLÁR</text>
<text x="414" y="866" textLength="38" lengthAdjust="spacingAndGlyphs">UCHOP</text>
<text x="459" y="866" textLength="20" lengthAdjust="spacingAndGlyphs">TLČ</text>
<text x="485" y="866" textLength="35" lengthAdjust="spacingAndGlyphs">MODEL</text>
</g>
<!-- taskbar -->
<g>
<rect x="5" y="875" width="7" height="8" fill="#e04020"/>
<rect x="13" y="875" width="6" height="7" fill="#60b030"/><rect x="5" y="884" width="7" height="7" fill="#3060d0"/><rect x="13" y="883" width="6" height="7" fill="#f0c020"/>
<text x="22" y="887" textLength="28" lengthAdjust="spacingAndGlyphs" style="font-weight:bold;font-size:12px">Start</text>
<rect x="64" y="876" width="14" height="14" fill="#3f88c4"/><path d="M66 878V887H69M72 878H77M74.500 878V887" stroke="#d8e8f4" stroke-width="1.200" fill="none"/>
<text x="84" y="887" textLength="128" lengthAdjust="spacingAndGlyphs" style="font-weight:bold;font-size:11.500px">AutoCAD LT - [C:\Doc...</text>
<text x="1353" y="889" textLength="14" lengthAdjust="spacingAndGlyphs" style="fill:#fff;font-size:12px">CS</text>
<text x="1384" y="888" style="font-size:13px;font-weight:bold">«</text>
<text x="1402" y="888" textLength="28" lengthAdjust="spacingAndGlyphs" style="font-size:11.500px">22:59</text>
</g>
</svg>
</body></html>
